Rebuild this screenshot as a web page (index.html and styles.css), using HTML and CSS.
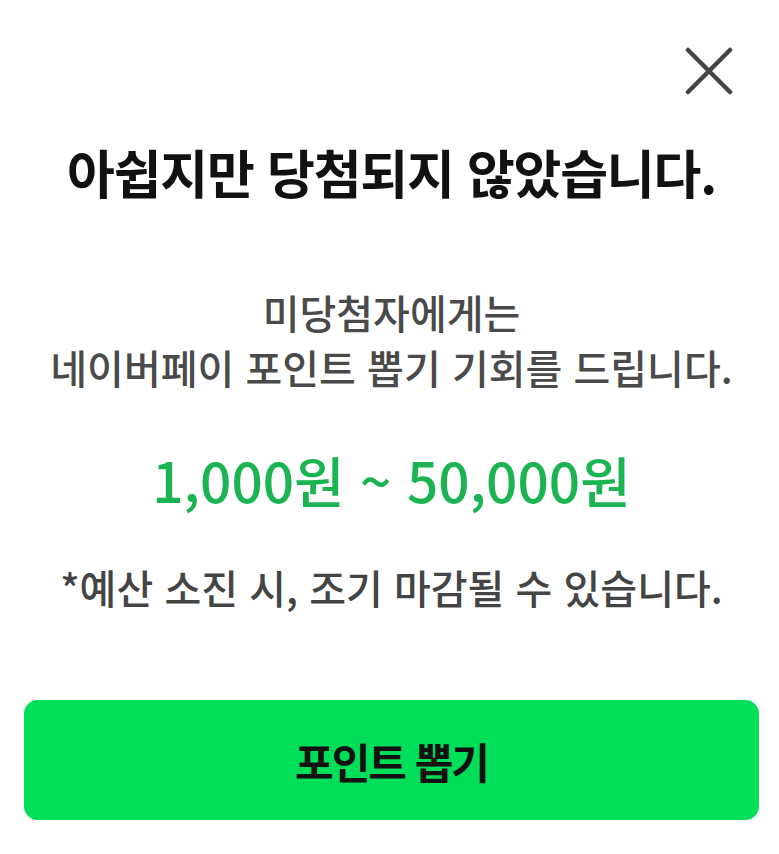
FILE: index.html
```html
<!DOCTYPE html>
<html lang="ko">
  <head>
    <meta charset="UTF-8" />
    <meta name="viewport" content="width=device-width, initial-scale=1.0" />
    <title>포인트 뽑기</title>
    <link rel="stylesheet" href="styles.css">
  </head>
  <body>
    <div class="popup">
      <div class="popup-top">
        <button class="close-button" aria-label="닫기">
          <svg width="48" height="48" viewBox="0 0 48 48">
            <path d="M3 3 L45 45 M45 3 L3 45" stroke="#444" stroke-width="4.5" stroke-linecap="round" fill="none" />
          </svg>
        </button>
      </div>
      <h1 class="title">아쉽지만 당첨되지 않았습니다.</h1>
      <p class="desc">미당첨자에게는<br />네이버페이 포인트 뽑기 기회를 드립니다.</p>
      <p class="amount">1,000원 ~ 50,000원</p>
      <p class="notice">*예산 소진 시, 조기 마감될 수 있습니다.</p>
      <button class="draw-button">포인트 뽑기</button>
    </div>
  </body>
</html>
```

FILE: styles.css
```css
/* result popup */
body {
  margin: 0;
  background-color: #fff;
  font-family: "Noto Sans CJK KR", "Noto Sans", sans-serif;
  color: #111;
}
.popup {
  display: flex;
  flex-direction: column;
  align-items: center;
  padding: 0 20px 0 24px;
}
.popup-top {
  align-self: stretch;
  display: flex;
  justify-content: flex-end;
  padding-top: 47px;
}
.close-button {
  width: 48px;
  height: 48px;
  padding: 0;
  margin-right: 26px;
  border: none;
  background: none;
  cursor: pointer;
}
.close-button svg {
  display: block;
}
.title {
  margin: 45px 0 0;
  font-size: 52px;
  font-weight: 700;
  letter-spacing: -1.2px;
  line-height: 64px;
  color: #111;
}
.desc {
  margin: 81px 0 0;
  font-size: 40px;
  font-weight: 500;
  letter-spacing: 0;
  line-height: 55px;
  text-align: center;
  color: #4a4a4a;
}
.amount {
  margin: 49px 0 0;
  font-size: 55px;
  font-weight: 500;
  letter-spacing: 0;
  line-height: 70px;
  color: #1cb452;
}
.notice {
  margin: 46px 0 0;
  font-size: 40px;
  font-weight: 500;
  letter-spacing: 0;
  line-height: 55px;
  color: #444;
}
.draw-button {
  align-self: stretch;
  margin: 85px 0 0;
  height: 120px;
  border: none;
  border-radius: 14px;
  background-color: #00de5a;
  color: #111;
  font-family: inherit;
  font-size: 42px;
  font-weight: 700;
  letter-spacing: -2px;
  cursor: pointer;
}
```
